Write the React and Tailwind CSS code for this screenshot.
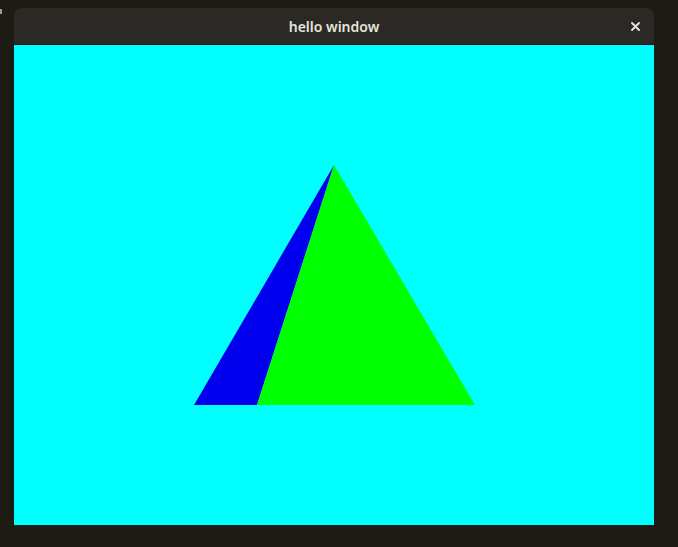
import React from "react";

const App = () => {
  return (
    <div className="w-[678px] h-[547px] bg-[#1c1b14] pt-[8px] pl-[14px] overflow-hidden relative">
      {/* stray desktop pixel at the edge */}
      <div className="absolute left-0 top-[9px] w-[2px] h-[5px] bg-[#9a9890]"></div>
      <div className="w-[640px] flex flex-col">
        {/* title bar */}
        <div className="h-[37px] bg-[#2a2925] rounded-t-[8px] border-b border-[#161511] flex items-center justify-center relative">
          <span
            className="text-[14px] font-semibold text-[#e6e3dc]"
            style={{ fontFamily: '"Noto Sans", "Open Sans", sans-serif' }}
          >
            hello window
          </span>
          <svg className="absolute right-[14px] top-[14px]" width="9" height="9" viewBox="0 0 9 9">
            <path d="M1 1 L8 8 M8 1 L1 8" stroke="#e8e6e0" strokeWidth="1.8" strokeLinecap="round" />
          </svg>
        </div>
        {/* gl canvas */}
        <div className="h-[480px] bg-[#00ffff]">
          <svg width="640" height="480" viewBox="0 0 640 480">
            <polygon points="320,120 180,360 243,360" fill="#0000ee" />
            <polygon points="320,120 243,360 461,360" fill="#00ff00" />
          </svg>
        </div>
      </div>
    </div>
  );
};

export default App;
